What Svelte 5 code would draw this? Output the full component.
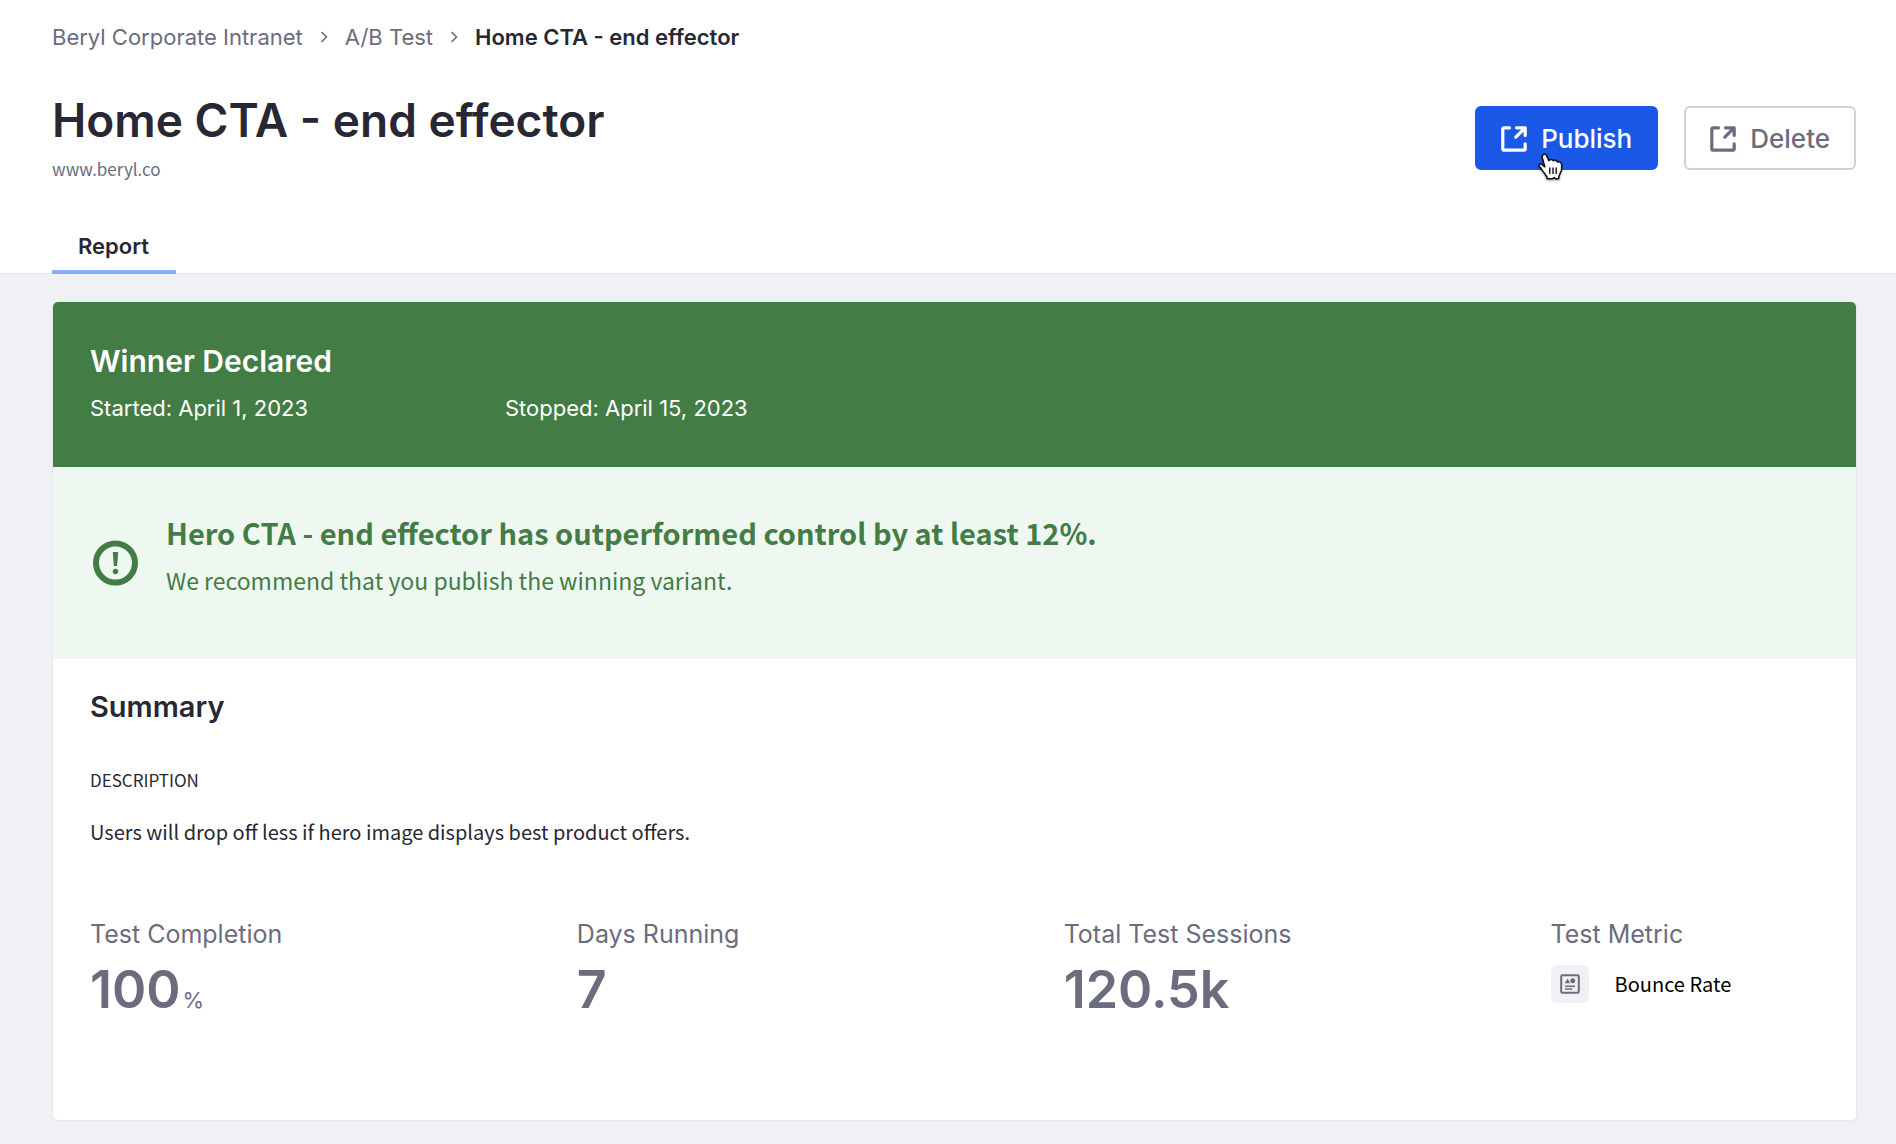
<script>
  const dates = ['Started: April 1, 2023', 'Stopped: April 15, 2023'];
  const stats = [
    { label: 'Test Completion', value: '100', unit: '%' },
    { label: 'Days Running', value: '7' },
    { label: 'Total Test Sessions', value: '120.5k' },
  ];
</script>

{#snippet chevron()}
  <svg class="chevron" viewBox="0 0 8 12" aria-hidden="true">
    <path d="M1.5 1 6.5 6l-5 5" />
  </svg>
{/snippet}

{#snippet external()}
  <svg class="external" viewBox="0 0 26 26" aria-hidden="true">
    <path d="M8.5 1.8H3.3Q1.8 1.8 1.8 3.3V22.7Q1.8 24.2 3.3 24.2H22.7Q24.2 24.2 24.2 22.7V17.8" />
    <path d="M15.5 1.8H24.2V9.5M23.4 2.6 14.8 11.2" />
  </svg>
{/snippet}

<header>
  <nav class="crumbs" aria-label="Breadcrumb">
    <a href="#intranet">Beryl Corporate Intranet</a>
    {@render chevron()}
    <a href="#tests">A/B Test</a>
    {@render chevron()}
    <span class="current" aria-current="page">Home CTA - end effector</span>
  </nav>

  <div class="title-row">
    <div>
      <h1>Home CTA - end effector</h1>
      <p class="site">www.beryl.co</p>
    </div>
    <div class="actions">
      <button type="button" class="primary">
        {@render external()}
        Publish
        <svg class="cursor" viewBox="0 0 25 28" aria-hidden="true">
          <path
            class="hand"
            d="M5.2 1.6C6.4.7 8 1.1 8.6 2.6L10.8 7.6C12.3 6.1 14.6 6.2 15.2 7.8 16.8 6.6 18.8 7.3 19.4 9 21 8.4 23.4 9.2 23.6 11.4V16.2C23.6 19.4 20.6 20.6 20.6 25.8H17.8L16.2 24.6 14.2 25.8H9.4C8.9 22.6 6.8 20.8 4.9 18.4 3.6 16.6 3.2 15.2 1.6 13.6.2 12 1.8 10.4 3.6 11.2L6.8 13.8 4.3 4.6C4 3.4 4.3 2.4 5.2 1.6Z"
          />
          <path class="lines" d="M11.8 14.6V21M15 14.6V21M18.2 14.6V21" />
        </svg>
      </button>
      <button type="button">
        {@render external()}
        Delete
      </button>
    </div>
  </div>

  <nav class="tabs" aria-label="Sections">
    <a href="#report" class="tab">Report</a>
  </nav>
</header>

<main>
  <article class="card">
    <section class="winner">
      <h2>Winner Declared</h2>
      <div class="dates">
        {#each dates as date}<span>{date}</span>{/each}
      </div>
    </section>

    <section class="outcome">
      <svg class="alert" viewBox="0 0 50 50" aria-hidden="true">
        <circle cx="25.5" cy="25" r="19.5" />
        <path d="M22.8 14H28.2L27.1 28H23.9Z" />
        <ellipse cx="25.5" cy="33.5" rx="2.7" ry="2.7" />
      </svg>
      <div class="outcome-text">
        <h3>Hero CTA - end effector has outperformed control by at least 12%.</h3>
        <p>We recommend that you publish the winning variant.</p>
      </div>
    </section>

    <section class="summary">
      <h2>Summary</h2>
      <h4>DESCRIPTION</h4>
      <p class="description">Users will drop off less if hero image displays best product offers.</p>
      <dl>
        {#each stats as stat}
          <div>
            <dt>{stat.label}</dt>
            <dd class="value">{stat.value}{#if stat.unit}<span class="unit">{stat.unit}</span>{/if}</dd>
          </div>
        {/each}
        <div>
          <dt>Test Metric</dt>
          <dd class="metric">
            <span class="badge">
              <svg viewBox="0 0 20 20" aria-hidden="true">
                <rect x="1.2" y="1.2" width="17.6" height="17.6" rx="1.4" />
                <path class="solid" d="M4.8 9.2 7.6 4.6 10 9.2Z" />
                <circle class="solid" cx="12.7" cy="6.8" r="2.5" />
                <path class="rule" d="M5 12.2H15M5 15H12.4" />
              </svg>
            </span>
            Bounce Rate
          </dd>
        </div>
      </dl>
    </section>
  </article>
</main>

<style>
  :global(body) {
    margin: 0;
    background: #f0f1f5;
    color: #272833;
    font-family: Inter, 'Liberation Sans', sans-serif;
  }

  h1, h2, h3, h4, p, dl, dd {
    margin: 0;
  }

  a {
    color: inherit;
    text-decoration: none;
  }

  header {
    padding: 23px 40px 0 52px;
    background: #fff;
    border-bottom: 1px solid #e5e6eb;
  }

  .crumbs {
    display: flex;
    align-items: center;
    gap: 17px;
    font-size: 22px;
    line-height: 28px;
    color: #6b6c7e;
  }

  .crumbs .current {
    font-weight: 600;
    color: #272833;
  }

  .chevron {
    width: 8px;
    height: 12px;
    fill: none;
    stroke: #6b6c7e;
    stroke-width: 1.6;
  }

  .title-row {
    display: flex;
    justify-content: space-between;
    align-items: flex-start;
    margin-top: 41px;
  }

  h1 {
    font-size: 46px;
    line-height: 56px;
    font-weight: 600;
  }

  .site {
    margin-top: 9px;
    font: 17px/24px 'Noto Sans CJK SC', sans-serif;
    color: #6b6c7e;
  }

  .actions {
    display: flex;
    gap: 26px;
    padding-top: 14px;
  }

  button {
    position: relative;
    display: flex;
    align-items: center;
    gap: 14px;
    height: 64px;
    padding: 1px 24px 0;
    border: 2px solid #d0d0dd;
    border-radius: 6px;
    background: #fff;
    color: #6b6c7e;
    font: 500 26px/32px Inter, 'Liberation Sans', sans-serif;
  }

  button.primary {
    border-color: #1a58e8;
    background: #1a58e8;
    color: #fff;
  }

  .external {
    width: 26px;
    height: 26px;
    fill: none;
    stroke: currentColor;
    stroke-width: 3.2;
    stroke-linecap: round;
    stroke-linejoin: round;
  }

  .cursor {
    position: absolute;
    left: 61px;
    top: 45px;
    width: 25px;
    height: 28px;
    filter: drop-shadow(0 1px 1px rgba(0, 0, 0, 0.4));
  }

  .hand {
    fill: #fff;
    stroke: #111;
    stroke-width: 1.5;
    stroke-linejoin: round;
  }

  .lines {
    stroke: #111;
    stroke-width: 1.4;
  }

  .tabs {
    display: flex;
    margin-top: 40px;
  }

  .tab {
    margin-bottom: -1px;
    padding: 11px 27px 10px 26px;
    border-bottom: 4px solid #89aef9;
    font-size: 22px;
    line-height: 28px;
    font-weight: 600;
  }

  main {
    padding: 28px 40px 24px 53px;
  }

  .card {
    overflow: hidden;
    border-radius: 5px;
    background: #fff;
    box-shadow: 0 0 0 1px #e7e7ed;
  }

  h2 {
    font-size: 29px;
    line-height: 36px;
    font-weight: 600;
  }

  .winner {
    padding: 41px 37px 45px;
    background: #437c44;
    color: #fff;
  }

  .winner h2 {
    font-size: 30px;
  }

  .dates {
    display: grid;
    grid-template-columns: 24% 1fr;
    margin-top: 15px;
    font-size: 22px;
    line-height: 28px;
  }

  .outcome {
    display: flex;
    align-items: center;
    gap: 26px;
    padding: 0 37px;
    background: #eef8f1;
    color: #437c44;
    font-family: 'Noto Sans CJK SC', sans-serif;
  }

  .outcome-text {
    padding: 44px 0 62px;
  }

  .outcome h3 {
    font-size: 29px;
    line-height: 42px;
    font-weight: 700;
  }

  .outcome p {
    margin-top: 10px;
    font-size: 23px;
    line-height: 34px;
  }

  .alert {
    flex: none;
    width: 50px;
    height: 50px;
    fill: currentColor;
  }

  .alert circle {
    fill: none;
    stroke: currentColor;
    stroke-width: 6;
  }

  .summary {
    padding: 30px 35px 100px 37px;
  }

  h4 {
    margin-top: 43px;
    font: 17px/24px 'Noto Sans CJK SC', sans-serif;
  }

  .description {
    margin-top: 25px;
    font: 20px/30px 'Noto Sans CJK SC', sans-serif;
  }

  dl {
    display: grid;
    grid-template-columns: 9fr 9fr 9fr 5fr;
    margin-top: 71px;
    color: #6b6c7e;
  }

  dt {
    margin-bottom: 10px;
    font-size: 25px;
    line-height: 32px;
  }

  .value {
    font-size: 52px;
    line-height: 60px;
    font-weight: 600;
  }

  .unit {
    margin-left: 2px;
    font-size: 22px;
    line-height: 28px;
    font-weight: 400;
  }

  .metric {
    display: flex;
    align-items: center;
    gap: 26px;
    padding-top: 5px;
    color: #000;
    font: 20px/30px 'Noto Sans CJK SC', sans-serif;
  }

  .badge {
    display: flex;
    padding: 9px;
    border-radius: 6px;
    background: #f0f1f5;
  }

  .badge svg {
    width: 20px;
    height: 20px;
    fill: none;
    stroke: #6b6c7e;
    stroke-width: 2;
  }

  .badge .solid {
    fill: #6b6c7e;
    stroke: none;
  }

  .badge .rule {
    stroke-width: 1.4;
  }
</style>
